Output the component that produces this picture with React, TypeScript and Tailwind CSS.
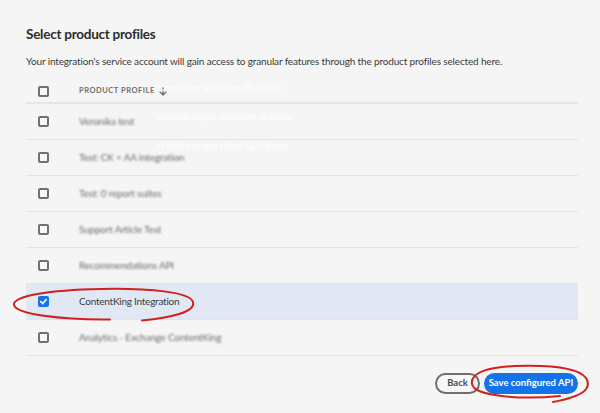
import React from "react";

const rows = [
  { name: "Veronika test", blur: true },
  { name: "Test: CK + AA integration", blur: true },
  { name: "Test: 0 report suites", blur: true },
  { name: "Support Article Test", blur: true },
  { name: "Recommendations API", blur: true },
  { name: "ContentKing Integration", blur: false, checked: true },
  { name: "Analytics - Exchange ContentKing", blur: true },
];

function Box({ checked }: { checked?: boolean }) {
  if (checked) {
    return (
      <div className="w-[11px] h-[11px] rounded-[2px] bg-[#1473e6] flex items-center justify-center">
        <svg width="9" height="9" viewBox="0 0 10 10">
          <path d="M2 5.2 L4.2 7.3 L8 2.8" fill="none" stroke="white" strokeWidth="1.8" strokeLinecap="round" strokeLinejoin="round" />
        </svg>
      </div>
    );
  }
  return <div className="w-[11px] h-[11px] rounded-[2px] border-2 border-[#707070] bg-[#f8f8f8]" />;
}

export default function App() {
  return (
    <div
      className="relative w-[600px] h-[413px] overflow-hidden bg-[#f5f5f5] pl-[26px] pr-[22px] pt-[24px]"
      style={{ fontFamily: "Lato, 'Open Sans', sans-serif" }}
    >
      <h1 className="text-[13.5px] leading-[20px] font-bold tracking-[-0.25px] text-[#2c2c2c]">Select product profiles</h1>
      <p className="mt-[9px] text-[10px] leading-[16px] tracking-[-0.15px] text-[#3a3a3a]">
        Your integration's service account will gain access to granular features through the product profiles selected here.
      </p>

      <div className="mt-[11px]">
        <div className="h-[24px] flex items-center border-b-2 border-[#e6e6e6]">
          <div className="w-[53px] pl-[12px] flex items-center">
            <Box />
          </div>
          <div className="flex items-center gap-[4px] text-[7.5px] font-bold tracking-[0.07em] text-[#6e6e6e]">
            <span>PRODUCT PROFILE</span>
            <svg width="8" height="9" viewBox="0 0 8 9">
              <path d="M4 0.5 V8 M1 5 L4 8 L7 5" fill="none" stroke="#6e6e6e" strokeWidth="1.2" strokeLinecap="round" strokeLinejoin="round" />
            </svg>
          </div>
        </div>
        {rows.map((r) => (
          <div
            key={r.name}
            className={
              "h-[36px] flex items-center border-b border-[#e3e3e3] " + (r.checked ? "bg-[#e1e8f4]" : "")
            }
          >
            <div className="w-[53px] pl-[12px] flex items-center">
              <Box checked={r.checked} />
            </div>
            <span
              className={
                r.blur
                  ? "text-[10px] tracking-[-0.2px] text-[#6c6c6c] blur-[1.3px]"
                  : "text-[10px] tracking-[-0.25px] text-[#3c3c3c]"
              }
            >
              {r.name}
            </span>
          </div>
        ))}
      </div>

      <div className="mt-[17px] flex justify-end gap-[4px]">
        <button className="h-[21px] w-[45px] rounded-full border-2 border-[#6f6f6f] bg-[#f7f7f7] text-[9.5px] font-bold text-[#4b4b4b] flex items-center justify-center">
          Back
        </button>
        <button className="h-[21px] w-[94px] rounded-full bg-[#1473e6] text-[9.5px] font-bold text-white flex items-center justify-center">
          Save configured API
        </button>
      </div>

      <div className="absolute left-[157px] top-[82px] flex flex-col gap-[17px] text-[8.5px] leading-[12px] text-white/90 pointer-events-none">
        <span>consectetur adipiscing elit, sed do</span>
        <span>eiusmod tempor incididunt ut labore</span>
        <span>et dolore magna aliqua. Quis ipsum</span>
      </div>

      <svg className="absolute left-0 top-0 pointer-events-none" width="600" height="413" viewBox="0 0 600 413">
        <g fill="none" stroke="#d1211f" strokeWidth="2" strokeLinecap="round">
          <path d="M142 320.5 C170 318 196 312 193 302 C190 292 150 288 100 289 C50 290 12 296 14 305 C16 314 60 320 110 319.5" />
          <path d="M553 402 C585 396 592 388 586 378 C578 367 545 365 515 366 C490 367 470 372 472 384 C474 396 520 400 560 396" />
        </g>
      </svg>
    </div>
  );
}
